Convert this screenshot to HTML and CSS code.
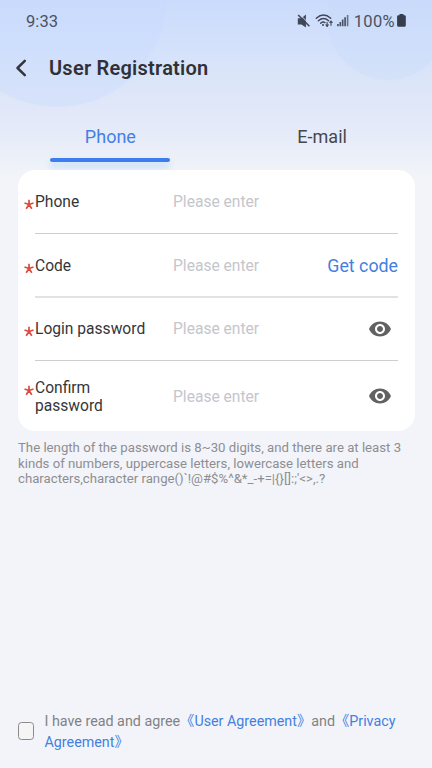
FILE: index.html
```html
<!DOCTYPE html>
<html lang="en">
<head>
<meta charset="utf-8">
<title>User Registration</title>
<link rel="stylesheet" href="styles.css">
</head>
<body>
<div class="screen">
  <header class="status">
    <span class="time">9:33</span>
    <svg class="status-icons" width="53" height="16" viewBox="0 0 53 16" fill="none">
      <path fill="#3f4758" d="M1.8 5.3h3.6L9.9 1.5v13L5.5 11.4H1.8z"/>
      <path stroke="#cddcfa" stroke-width="1" d="M3.6 1.2 14.2 11.8"/>
      <path stroke="#3f4758" stroke-width="1.6" d="M2.2 2 13.4 13.2"/>
      <g stroke="#3f4758" stroke-width="1.4" stroke-linecap="round">
        <path d="M20.3 5.2q7.2-6.2 14.4 0M22.4 7.8q5.1-4.5 10.2 0M24.7 10.2q2.2-2 4.2-.6"/>
        <path d="M31.1 9.4v3.6M35 12.3V9" stroke-width="1.1"/>
      </g>
      <circle cx="27" cy="12" r="1" fill="#3f4758"/>
      <path fill="#3f4758" d="M29 11.6h4.2l-2.1 2.6zM32.9 9.8h4.2L35 7.2z"/>
      <path stroke="#4c5568" stroke-width="1.7" d="M41.9 13.2v-2.2M44.3 13.2V9M46.7 13.2V6.6M49.1 13.2V4.3"/>
      <path stroke="#69748a" stroke-width="1.6" d="M51.6 13.2V2"/>
    </svg>
    <span class="percent">100%</span>
    <svg width="9" height="13" viewBox="0 0 9 13"><path fill="#363d4c" d="M2.5 0h4v1.2h.9q1.4 0 1.4 1.4v8.7q0 1.5-1.5 1.5H1.6q-1.5 0-1.5-1.5V2.6q0-1.4 1.4-1.4h1z"/></svg>
  </header>
  <div class="titlebar">
    <svg width="14" height="20" viewBox="0 0 14 20" fill="none"><path stroke="#34363e" stroke-width="2.5" stroke-linecap="round" stroke-linejoin="round" d="M10.8 2.8 3.5 10l7.3 7.2"/></svg>
    <h1>User Registration</h1>
  </div>
  <nav class="tabs">
    <a class="tab active">Phone</a>
    <a class="tab">E-mail</a>
  </nav>
  <main class="card">
    <div class="row">
      <span class="star"><svg width="10" height="11" viewBox="0 0 10 11"><path d="M5 5.5V.7M5 5.5.5 4M5 5.5 9.5 4M5 5.5 2.2 9.8M5 5.5l2.8 4.3"/></svg></span>
      <span class="label">Phone</span><span class="hint">Please enter</span>
    </div>
    <div class="row soft">
      <span class="star"><svg width="10" height="11" viewBox="0 0 10 11"><path d="M5 5.5V.7M5 5.5.5 4M5 5.5 9.5 4M5 5.5 2.2 9.8M5 5.5l2.8 4.3"/></svg></span>
      <span class="label">Code</span><span class="hint">Please enter</span><a class="get">Get code</a>
    </div>
    <div class="row">
      <span class="star"><svg width="10" height="11" viewBox="0 0 10 11"><path d="M5 5.5V.7M5 5.5.5 4M5 5.5 9.5 4M5 5.5 2.2 9.8M5 5.5l2.8 4.3"/></svg></span>
      <span class="label">Login password</span><span class="hint">Please enter</span>
      <svg class="eye" width="22" height="16" viewBox="1 4.5 22 15"><path fill="#626262" d="M12 4.5C7 4.5 2.73 7.61 1 12c1.73 4.39 6 7.5 11 7.5s9.27-3.11 11-7.5c-1.73-4.39-6-7.5-11-7.5zM12 17c-2.76 0-5-2.24-5-5s2.24-5 5-5 5 2.24 5 5-2.24 5-5 5zm0-8c-1.66 0-3 1.34-3 3s1.34 3 3 3 3-1.34 3-3-1.34-3-3-3z"/></svg>
    </div>
    <div class="row tall">
      <span class="star"><svg width="10" height="11" viewBox="0 0 10 11"><path d="M5 5.5V.7M5 5.5.5 4M5 5.5 9.5 4M5 5.5 2.2 9.8M5 5.5l2.8 4.3"/></svg></span>
      <span class="label">Confirm password</span><span class="hint">Please enter</span>
      <svg class="eye" width="22" height="16" viewBox="1 4.5 22 15"><path fill="#626262" d="M12 4.5C7 4.5 2.73 7.61 1 12c1.73 4.39 6 7.5 11 7.5s9.27-3.11 11-7.5c-1.73-4.39-6-7.5-11-7.5zM12 17c-2.76 0-5-2.24-5-5s2.24-5 5-5 5 2.24 5 5-2.24 5-5 5zm0-8c-1.66 0-3 1.34-3 3s1.34 3 3 3 3-1.34 3-3-1.34-3-3-3z"/></svg>
    </div>
  </main>
  <p class="note">The length of the password is 8~30 digits, and there are at least 3<br>kinds of numbers, uppercase letters, lowercase letters and<br>characters,character range()`!@#$%^&amp;*_-+=|{}[]:;'&lt;&gt;,.?</p>
  <footer class="agree">
    <span class="box"></span>
    <p>I have read and agree<a>《User Agreement》</a>and<a>《Privacy<br>Agreement》</a></p>
  </footer>
</div>
</body>
</html>
```
FILE: styles.css
```css
* { box-sizing: border-box; }
body { margin: 0; font-family: Roboto, "Noto Sans CJK SC", sans-serif; color: #35363a; }
h1, p { margin: 0; }
svg { display: block; flex: none; }
.screen {
  width: 432px; height: 768px; overflow: hidden;
  display: flex; flex-direction: column;
  background:
    radial-gradient(circle at 57px -3px, rgba(198, 217, 255, .34) 109px, transparent 111px),
    radial-gradient(circle at 388px 19px, rgba(198, 217, 250, .34) 60px, transparent 62px),
    linear-gradient(#cbdbfb 0, #d5e2fb 52px, #dbe5f8 78px, #e0e7f8 105px, #e7ecf8 140px, #f0f3f8 172px, #f3f4f9 182px);
}
.status { height: 41px; padding: 0 26px; display: flex; align-items: center; font-size: 16.5px; color: #4a5262; }
.time { flex: 1; letter-spacing: .1px; padding-top: 1px; }
.percent { margin: 0 2px 0 5px; letter-spacing: .35px; padding-top: 1px; }
.titlebar { height: 54px; padding-left: 14px; display: flex; align-items: center; gap: 21px; }
h1 { font-size: 20px; line-height: 24px; font-weight: 600; letter-spacing: .24px; color: #303137; }
.tabs { height: 75px; display: flex; padding: 25px 4px 0 4.5px; }
.tab { width: 212px; display: flex; flex-direction: column; align-items: center; font-size: 18px; line-height: 34px; color: #44474e; }
.active { color: #447fe6; }
.active::after { content: ""; width: 120px; height: 4px; margin-top: 4px; border-radius: 2px; background: #3e7df0; box-shadow: 0 5px 7px rgba(110, 180, 255, .4); }
.card { width: 397px; height: 261px; margin-left: 18px; padding: 0 17px 0 6px; border-radius: 17px; background: #fff; position: relative; }
.row { height: 63.6px; display: grid; grid-template-columns: 11px 138px 1fr auto; align-items: center; font-size: 15.6px; line-height: 19px; position: relative; }
.row:not(.tall)::after { content: ""; position: absolute; left: 11px; right: 0; bottom: 0; height: 1px; background: #cecece; }
.row.soft::after { bottom: -1px; height: 2px; background: #e2e2e2; }
.tall { height: 71px; }
.star { padding-top: 6px; }
.star path { stroke: #dd4a40; stroke-width: 1.7; fill: none; }
.tall .star { align-self: start; padding-top: 24px; }
.label, .hint { padding-top: 2px; }
.tall .label { width: 90px; line-height: 18.5px; }
.tall .hint { padding-top: 3px; }
.hint { color: #c5c6cc; }
.get { font-size: 17.8px; color: #447fe0; padding-top: 1px; }
.eye { margin-right: 7px; }
.note { margin: 9px 0 0 18px; font-size: 13.2px; line-height: 15.6px; color: #8d8e92; white-space: nowrap; }
.agree { margin-top: auto; height: 58px; padding-left: 18px; display: flex; gap: 10.5px; }
.box { width: 16px; height: 18px; margin-top: 12px; border: 1px solid #8a8a8a; border-radius: 3.5px; background: #f5f5f5; }
.agree p { padding-top: 1px; font-size: 14.3px; line-height: 21px; color: #818286; white-space: nowrap; }
.agree a { color: #447fe0; }
```
